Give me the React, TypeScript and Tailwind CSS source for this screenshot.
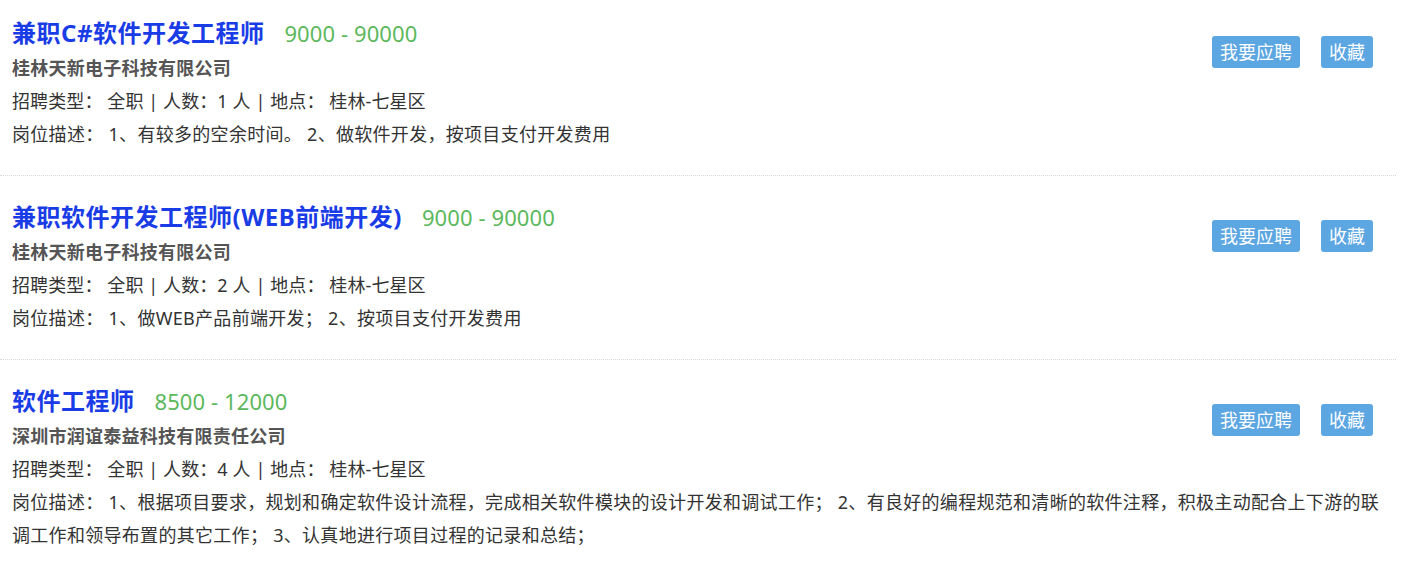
import React from 'react'

const jobs = [
  {
    title: '兼职C#软件开发工程师',
    salary: '9000 - 90000',
    company: '桂林天新电子科技有限公司',
    count: 1,
    desc: '1、有较多的空余时间。 2、做软件开发，按项目支付开发费用',
  },
  {
    title: '兼职软件开发工程师(WEB前端开发)',
    salary: '9000 - 90000',
    company: '桂林天新电子科技有限公司',
    count: 2,
    desc: '1、做WEB产品前端开发； 2、按项目支付开发费用',
  },
  {
    title: '软件工程师',
    salary: '8500 - 12000',
    company: '深圳市润谊泰益科技有限责任公司',
    count: 4,
    desc: '1、根据项目要求，规划和确定软件设计流程，完成相关软件模块的设计开发和调试工作； 2、有良好的编程规范和清晰的软件注释，积极主动配合上下游的联调工作和领导布置的其它工作； 3、认真地进行项目过程的记录和总结；',
  },
]

export default function App() {
  return (
    <div className="w-[1408px] h-[566px] overflow-hidden bg-white text-[#333] font-['Noto_Sans','Noto_Sans_CJK_SC',sans-serif]">
      <div className="w-[1396px]">
        {jobs.map((j, i) => (
          <div
            key={j.title}
            className={`pl-3 pr-1 pb-6 ${i === 0 ? 'pt-[14px]' : 'pt-[22px]'} ${i < jobs.length - 1 ? 'border-b border-dotted border-[#d8d8d8]' : ''}`}
          >
            <div className="flex items-start justify-between">
              <div>
                <div className="flex items-baseline h-[38px] leading-[38px]">
                  <span className="text-[24px] font-bold text-[#1a3ce6] tracking-[0.5px]">{j.title}</span>
                  <span className="ml-5 text-[22px] text-[#5cb85c] tracking-[0.1px]">{j.salary}</span>
                </div>
                <div className="text-[18px] leading-[33px] font-bold text-[#555] tracking-[0.25px]">{j.company}</div>
                <div className="text-[18px] leading-[33px] tracking-[0.1px]">
                  招聘类型：&nbsp;全职 | 人数：{j.count} 人 | 地点：&nbsp;桂林-七星区
                </div>
              </div>
              <div className="mt-[22px] mr-[19px] flex gap-[21px]">
                <button className="h-8 px-2 rounded-[3px] bg-[#5ca6e2] text-white text-[18px] leading-8">我要应聘</button>
                <button className="h-8 px-2 rounded-[3px] bg-[#5ca6e2] text-white text-[18px] leading-8">收藏</button>
              </div>
            </div>
            <div className="text-[18px] leading-[33px] tracking-[0.3px]">
              岗位描述：&nbsp;{j.desc}
            </div>
          </div>
        ))}
      </div>
    </div>
  )
}
